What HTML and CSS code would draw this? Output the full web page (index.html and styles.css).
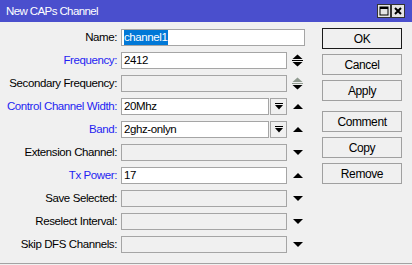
FILE: index.html
```html
<!DOCTYPE html>
<html lang="en">
<head>
    <meta charset="UTF-8">
    <title>New CAPs Channel</title>
    <link rel="stylesheet" href="styles.css">
</head>
<body>
    <div class="window">
        <!-- title bar -->
        <div class="titlebar">
            <span class="title">New CAPs Channel</span>
            <div class="title-buttons">
                <span class="tb-btn">
                    <svg width="10" height="10" viewBox="0 0 10 10"><rect x="1" y="1" width="8" height="8" fill="none" stroke="#000" stroke-width="1"/><rect x="1" y="1" width="8" height="2" fill="#000"/></svg>
                </span>
                <span class="tb-btn">
                    <svg width="10" height="10" viewBox="0 0 10 10"><path d="M2 2 L8 8 M8 2 L2 8" stroke="#000" stroke-width="2"/></svg>
                </span>
            </div>
        </div>

        <div class="body">
            <!-- form rows -->
            <div class="form">
                <span class="lbl">Name:</span>
                <div class="field">
                    <div class="input"><span class="sel">channel1</span></div>
                </div>

                <span class="lbl blue">Frequency:</span>
                <div class="field">
                    <div class="input">2412</div>
                    <span class="slot">
                        <svg width="11" height="13" viewBox="0 0 11 13"><path d="M0.5 5 L5.5 0.5 L10.5 5Z"/><rect x="0" y="6" width="11" height="1"/><path d="M0.5 8 L10.5 8 L5.5 12.5Z"/></svg>
                    </span>
                </div>

                <span class="lbl">Secondary Frequency:</span>
                <div class="field">
                    <div class="input off"></div>
                    <span class="slot">
                        <svg width="11" height="13" viewBox="0 0 11 13"><path d="M0.5 5 L5.5 0.5 L10.5 5Z" fill="#8f9a8f"/><rect x="0" y="6" width="11" height="1" fill="#8f9a8f"/><path d="M0.5 8 L10.5 8 L5.5 12.5Z"/></svg>
                    </span>
                </div>

                <span class="lbl blue">Control Channel Width:</span>
                <div class="field">
                    <div class="input">20Mhz</div>
                    <span class="drop">
                        <svg width="8" height="7" viewBox="0 0 8 7"><rect x="0" y="0" width="8" height="1"/><path d="M0 2 L8 2 L4 6.5Z"/></svg>
                    </span>
                    <span class="slot">
                        <svg width="10" height="5" viewBox="0 0 10 5"><path d="M0 5 L5 0 L10 5Z"/></svg>
                    </span>
                </div>

                <span class="lbl blue">Band:</span>
                <div class="field">
                    <div class="input">2ghz-onlyn</div>
                    <span class="drop">
                        <svg width="8" height="7" viewBox="0 0 8 7"><rect x="0" y="0" width="8" height="1"/><path d="M0 2 L8 2 L4 6.5Z"/></svg>
                    </span>
                    <span class="slot">
                        <svg width="10" height="5" viewBox="0 0 10 5"><path d="M0 5 L5 0 L10 5Z"/></svg>
                    </span>
                </div>

                <span class="lbl">Extension Channel:</span>
                <div class="field">
                    <div class="input off"></div>
                    <span class="slot">
                        <svg width="10" height="5" viewBox="0 0 10 5"><path d="M0 0 L10 0 L5 5Z"/></svg>
                    </span>
                </div>

                <span class="lbl blue">Tx Power:</span>
                <div class="field">
                    <div class="input">17</div>
                    <span class="slot">
                        <svg width="10" height="5" viewBox="0 0 10 5"><path d="M0 5 L5 0 L10 5Z"/></svg>
                    </span>
                </div>

                <span class="lbl">Save Selected:</span>
                <div class="field">
                    <div class="input off"></div>
                    <span class="slot">
                        <svg width="10" height="5" viewBox="0 0 10 5"><path d="M0 0 L10 0 L5 5Z"/></svg>
                    </span>
                </div>

                <span class="lbl">Reselect Interval:</span>
                <div class="field">
                    <div class="input off"></div>
                    <span class="slot">
                        <svg width="10" height="5" viewBox="0 0 10 5"><path d="M0 0 L10 0 L5 5Z"/></svg>
                    </span>
                </div>

                <span class="lbl">Skip DFS Channels:</span>
                <div class="field">
                    <div class="input off"></div>
                    <span class="slot">
                        <svg width="10" height="5" viewBox="0 0 10 5"><path d="M0 0 L10 0 L5 5Z"/></svg>
                    </span>
                </div>
            </div>

            <!-- dialog buttons -->
            <div class="buttons">
                <button class="btn default">OK</button>
                <button class="btn">Cancel</button>
                <button class="btn">Apply</button>
                <button class="btn spaced">Comment</button>
                <button class="btn">Copy</button>
                <button class="btn">Remove</button>
            </div>
        </div>
    </div>
</body>
</html>
```

FILE: styles.css
```css
* {
    margin: 0;
    padding: 0;
    box-sizing: border-box;
}

html, body {
    background: #f0f0f0;
}

body {
    font-family: "Liberation Sans", Arial, sans-serif;
    font-size: 11.5px;
    letter-spacing: -0.4px;
    color: #000;
    width: 412px;
    height: 265px;
    overflow: hidden;
}

.window {
    width: 412px;
    height: 264px;
    border-bottom: 1px solid #a3a3a3;
    display: flex;
    flex-direction: column;
}

/* title bar */
.titlebar {
    height: 22px;
    background: #4a4fcd;
    display: flex;
    align-items: center;
    padding: 0 7px 1px 6px;
}

.title {
    color: #fff;
    font-size: 11.5px;
    letter-spacing: -0.6px;
    flex: 1;
}

.title-buttons {
    display: flex;
}

.tb-btn {
    width: 14px;
    height: 14px;
    background: #e4e4e4;
    border: 1px solid #333;
    display: flex;
    align-items: center;
    justify-content: center;
}

/* body */
.body {
    flex: 1;
    display: flex;
    padding: 7px 10px 0 0;
}

.form {
    display: grid;
    grid-template-columns: 117px 184px;
    grid-auto-rows: 17px;
    column-gap: 4px;
    row-gap: 6px;
}

.lbl {
    text-align: right;
    line-height: 17px;
    white-space: nowrap;
}

.lbl.blue {
    color: #1f1ff2;
}

.field {
    display: flex;
    height: 17px;
}

.input {
    flex: 1;
    height: 17px;
    background: #fff;
    border: 1px solid #a5a5a5;
    padding-left: 2px;
    line-height: 15px;
    white-space: nowrap;
    overflow: hidden;
}

.input.off {
    background: #f0f0f0;
}

.sel {
    display: inline-block;
    background: #0078d7;
    color: #fff;
    height: 15px;
    line-height: 15px;
    padding-right: 1px;
}

.drop {
    width: 17px;
    height: 17px;
    margin-left: 1px;
    border: 1px solid #a5a5a5;
    background: #f0f0f0;
    display: flex;
    align-items: center;
    justify-content: center;
}

.slot {
    width: 18px;
    display: flex;
    align-items: center;
    justify-content: flex-end;
    padding-right: 2px;
}

/* buttons */
.buttons {
    margin-left: auto;
    width: 80px;
    display: flex;
    flex-direction: column;
    gap: 5px;
    margin-top: -1px;
}

.btn {
    height: 21px;
    width: 80px;
    background: #f0f0f0;
    border: 1px solid #a0a0a0;
    font-family: inherit;
    font-size: 12px;
    letter-spacing: -0.4px;
    color: #000;
}

.btn.default {
    border-color: #1a1a1a;
}

.btn.spaced {
    margin-top: 5px;
}
```
